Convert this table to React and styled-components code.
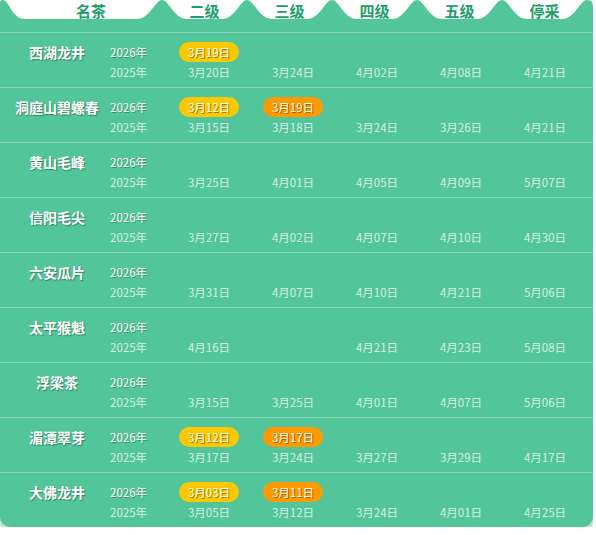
import React from 'react'
import styled, { createGlobalStyle } from 'styled-components'

const GlobalStyle = createGlobalStyle`
  body {
    margin: 0;
    background: #ffffff;
    font-family: "Noto Sans CJK SC", "Noto Sans", sans-serif;
  }
`;

const GREEN = '#52c59b';

const Panel = styled.div`
  width: 593px;
`;

const Header = styled.div`
  display: flex;
  height: 19px;
  align-items: stretch;
`;

const Tab = styled.div`
  flex: 0 0 ${p => p.w}px;
  display: flex;
  align-items: center;
  justify-content: ${p => (p.lead ? 'flex-end' : 'center')};
  padding-right: ${p => p.pr || 0}px;
  box-sizing: border-box;
  color: #1b9f69;
  font-size: 15px;
  font-weight: bold;
  line-height: 19px;
  padding-top: 1px;
`;

const Peak = styled.svg`
  flex: 0 0 auto;
  display: block;
`;

const Body = styled.div`
  background: ${GREEN};
  padding-top: 13px;
  border-radius: 0 0 10px 10px;
  box-shadow: 0 6px 0 #bde5d4, 3px 6px 0 -4px #bde5d4;
`;

const Row = styled.div`
  display: grid;
  grid-template-columns: 110px 57px repeat(5, 84px);
  grid-template-rows: 20px 20px;
  padding: 9px 6px 5px 0;
  border-top: 1px solid rgba(255, 255, 255, 0.28);
`;

const Name = styled.div`
  padding-left: 4px;
  text-align: center;
  color: #ffffff;
  font-size: 14px;
  font-weight: bold;
  line-height: 20px;
  text-shadow: 1px 1px 1px rgba(0, 0, 0, 0.35);
  white-space: nowrap;
`;

const Year = styled.div`
  font-size: 11.5px;
  line-height: 20px;
  color: ${p => (p.current ? '#ffffff' : '#d3f1e4')};
  text-shadow: ${p => (p.current ? '1px 1px 0 rgba(0,0,0,0.25)' : 'none')};
`;

const Cell = styled.div`
  display: flex;
  align-items: center;
  justify-content: center;
  font-size: 11.5px;
  line-height: 20px;
  color: #d3f1e4;
  white-space: nowrap;
`;

const Badge = styled.span`
  display: inline-flex;
  align-items: center;
  justify-content: center;
  width: 60px;
  height: 20px;
  border-radius: 10px;
  background: ${p => (p.tone === 'orange' ? '#ff9900' : '#fcc800')};
  color: #ffffff;
  font-size: 11.5px;
  text-shadow: 1px 1px 0 rgba(90, 50, 0, 0.55);
`;

const teas = [
  { name: '西湖龙井', now: [['3月19日', 'yellow']], last: ['3月20日', '3月24日', '4月02日', '4月08日', '4月21日'] },
  { name: '洞庭山碧螺春', now: [['3月12日', 'yellow'], ['3月19日', 'orange']], last: ['3月15日', '3月18日', '3月24日', '3月26日', '4月21日'] },
  { name: '黄山毛峰', now: [], last: ['3月25日', '4月01日', '4月05日', '4月09日', '5月07日'] },
  { name: '信阳毛尖', now: [], last: ['3月27日', '4月02日', '4月07日', '4月10日', '4月30日'] },
  { name: '六安瓜片', now: [], last: ['3月31日', '4月07日', '4月10日', '4月21日', '5月06日'] },
  { name: '太平猴魁', now: [], last: ['4月16日', '', '4月21日', '4月23日', '5月08日'] },
  { name: '浮梁茶', now: [], last: ['3月15日', '3月25日', '4月01日', '4月07日', '5月06日'] },
  { name: '湄潭翠芽', now: [['3月12日', 'yellow'], ['3月17日', 'orange']], last: ['3月17日', '3月24日', '3月27日', '3月29日', '4月17日'] },
  { name: '大佛龙井', now: [['3月03日', 'yellow'], ['3月11日', 'orange']], last: ['3月05日', '3月12日', '3月24日', '4月01日', '4月25日'] },
];

const levels = ['二级', '三级', '四级', '五级', '停采'];

// green bump between two white header tabs
const Bump = () => (
  <Peak width="50" height="19" viewBox="0 0 50 19">
    <path d="M0 19 C13 19 18 0 25 0 C32 0 37 19 50 19 Z" fill={GREEN} />
  </Peak>
);

const App = () => {
  return (
    <Panel>
      <GlobalStyle />
      <Header>
        <Peak width="25" height="19" viewBox="0 0 25 19">
          <path d="M0 19 L0 3 Q0 0 3 0 C9 0 12 19 25 19 Z" fill={GREEN} />
        </Peak>
        <Tab w={112} lead pr={31}>名茶</Tab>
        {levels.map(l => (
          <React.Fragment key={l}>
            <Bump />
            <Tab w={35}>{l}</Tab>
          </React.Fragment>
        ))}
        <Peak width="31" height="19" viewBox="0 0 31 19">
          <path d="M0 19 C13 19 18 0 25 0 Q31 0 31 6 L31 19 Z" fill={GREEN} />
        </Peak>
      </Header>
      <Body>
        {teas.map(t => (
          <Row key={t.name}>
            <Name>{t.name}</Name>
            <Year current>2026年</Year>
            {[0, 1, 2, 3, 4].map(i => (
              <Cell key={'n' + i}>
                {t.now[i] && <Badge tone={t.now[i][1]}>{t.now[i][0]}</Badge>}
              </Cell>
            ))}
            <div />
            <Year>2025年</Year>
            {t.last.map((d, i) => (
              <Cell key={'l' + i}>{d}</Cell>
            ))}
          </Row>
        ))}
      </Body>
    </Panel>
  )
}

export default App
